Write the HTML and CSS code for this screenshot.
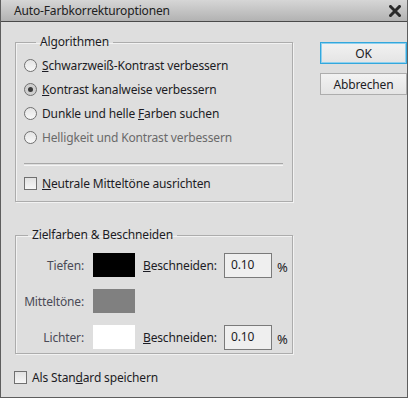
FILE: index.html
```html
<!DOCTYPE html>
<html lang="de">
<head>
  <meta charset="UTF-8" />
  <title>Auto-Farbkorrekturoptionen</title>
  <link rel="stylesheet" href="styles.css">
</head>
<body>

  <div class="window">
    <div class="titlebar">
      <span class="title">Auto-Farbkorrekturoptionen</span>
      <svg class="close" width="12" height="12" viewBox="0 0 12 12">
        <path d="M1.5 1.5 L10.5 10.5 M10.5 1.5 L1.5 10.5" stroke="#2a2a2a" stroke-width="3" stroke-linecap="square"/>
      </svg>
    </div>

    <div class="content">
      <div class="main">
        <fieldset class="group algo">
          <legend>Algorithmen</legend>
          <div class="option"><span class="radio"></span><span><u>S</u>chwarzweiß-Kontrast verbessern</span></div>
          <div class="option"><span class="radio checked"></span><span><u>K</u>ontrast kanalweise verbessern</span></div>
          <div class="option"><span class="radio"></span><span>Dunkle und helle <u>F</u>arben suchen</span></div>
          <div class="option disabled"><span class="radio"></span><span>Helligkeit und Kontrast verbessern</span></div>
          <div class="separator"></div>
          <div class="option"><span class="checkbox"></span><span><u>N</u>eutrale Mitteltöne ausrichten</span></div>
        </fieldset>

        <fieldset class="group target">
          <legend>Zielfarben &amp; Beschneiden</legend>
          <div class="row">
            <span class="lbl">Tiefen:</span>
            <span class="swatch black"></span>
            <span class="clip"><u>B</u>eschneiden:</span>
            <span class="num">0.10</span>
            <span class="pct">%</span>
          </div>
          <div class="row">
            <span class="lbl">Mitteltöne:</span>
            <span class="swatch gray"></span>
          </div>
          <div class="row">
            <span class="lbl">Lichter:</span>
            <span class="swatch white"></span>
            <span class="clip"><u>B</u>eschneiden:</span>
            <span class="num">0.10</span>
            <span class="pct">%</span>
          </div>
        </fieldset>

        <div class="option standard"><span class="checkbox"></span><span>Als Stan<u>d</u>ard speichern</span></div>
      </div>

      <div class="buttons">
        <div class="btn default">OK</div>
        <div class="btn">Abbrechen</div>
      </div>
    </div>
  </div>

</body>
</html>
```

FILE: styles.css
```css
body {
  margin: 0;
  padding: 0;
  font-family: 'Noto Sans', 'Segoe UI', sans-serif;
  font-size: 12px;
  letter-spacing: -0.15px;
  color: #1c1c24;
}

.window {
  width: 408px;
  height: 398px;
  box-sizing: border-box;
  background: #dedede;
  border: 1px solid #5e5e5e;
  border-top: none;
}

.titlebar {
  display: flex;
  align-items: center;
  justify-content: space-between;
  height: 21px;
  padding: 0 6px 0 13px;
  background: linear-gradient(#d6d6d6, #b2b2b2);
  border-bottom: 1px solid #4a4a4a;
}

.title {
  color: #202020;
}

.content {
  display: flex;
}

.main {
  width: 292px;
  padding-left: 13px;
}

.group {
  margin: 0 0 0 1px;
  padding: 0;
  width: 278px;
  box-sizing: border-box;
  border: 1px solid #acacac;
  box-shadow: 1px 1px 0 #f2f2f2, inset 1px 1px 0 #f2f2f2;
}

.group legend {
  margin-left: 12px;
  padding: 0 4px;
  line-height: 16px;
}

.algo {
  margin-top: 12px;
  padding: 3px 0 6px 8px;
}

.option {
  display: flex;
  align-items: center;
  height: 24px;
  gap: 5px;
}

.option.disabled {
  color: #6a6a6a;
}

.radio {
  width: 11px;
  height: 11px;
  border: 1px solid #707070;
  border-radius: 50%;
  background: linear-gradient(#e4e4e4, #f8f8f8);
  display: flex;
  align-items: center;
  justify-content: center;
}

.radio.checked {
  background: #cfcfcf;
}

.radio.checked::after {
  content: "";
  width: 5px;
  height: 5px;
  border-radius: 50%;
  background: #3a3a3a;
}

.checkbox {
  width: 11px;
  height: 11px;
  border: 1px solid #707070;
  background: linear-gradient(#e2e2e2, #f6f6f6);
}

.separator {
  height: 1px;
  margin: 14px 9px 5px 0;
  border-top: 1px solid #a8a8a8;
  border-bottom: 1px solid #f4f4f4;
}

.target {
  margin-top: 25px;
  padding: 3px 0 4px 0;
}

.row {
  display: flex;
  align-items: center;
  height: 24px;
  margin-top: 12px;
}

.row:first-of-type {
  margin-top: 7px;
}

.lbl {
  width: 68px;
  margin-right: 9px;
  text-align: right;
  color: #4a4a56;
}

.swatch {
  width: 42px;
  height: 24px;
}

.swatch.black { background: #000; }
.swatch.gray { background: #808080; }
.swatch.white { background: #fff; }

.clip {
  width: 81px;
  margin-left: 8px;
}

.num {
  width: 48px;
  height: 25px;
  box-sizing: border-box;
  padding: 2px 0 0 6px;
  border: 1px solid #7a7a7a;
  background: #efefef;
  align-self: flex-start;
}

.pct {
  margin-left: 5px;
  padding-top: 4px;
  font-size: 13px;
}

.standard {
  margin-top: 13px;
  height: 20px;
}

.buttons {
  display: flex;
  flex-direction: column;
  gap: 9px;
  margin-top: 20px;
  margin-left: 15px;
}

.btn {
  width: 87px;
  height: 22px;
  box-sizing: border-box;
  display: flex;
  align-items: center;
  justify-content: center;
  border: 1px solid #adadad;
  background: linear-gradient(#f2f2f2, #e4e4e4);
  color: #1c1c24;
}

.btn.default {
  border: 1px solid #33a7dc;
  box-shadow: inset 0 0 0 1px #8fd0ee;
}
```
